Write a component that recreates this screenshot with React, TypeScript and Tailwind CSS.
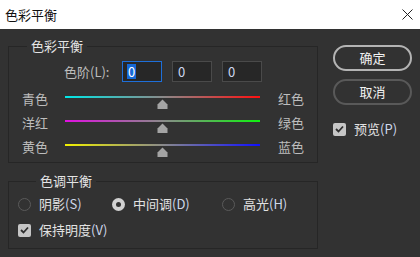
import type { ReactNode } from "react";

const font = { fontFamily: '"Noto Sans CJK SC", "Noto Sans", sans-serif' };

function Thumb() {
	return (
		<svg width="11" height="10" viewBox="0 0 11 10" className="absolute top-[3px] left-[92px]">
			<path d="M5.5 0.5 L10.5 5.5 V10 H0.5 V5.5 Z" fill="#a4a4a4" />
		</svg>
	);
}

function SliderRow({ left, right, from, to }: { left: string; right: string; from: string; to: string }) {
	return (
		<div className="flex h-[24px] items-start">
			<span className="w-[43px] text-[13px] leading-[24px] text-[#bdbdbd]">{left}</span>
			<div className="relative mt-[9px] h-[14px] w-[195px]">
				<div
					className="h-[2px] w-full"
					style={{ background: `linear-gradient(to right, ${from}, #8a8a8a 50%, ${to})` }}
				/>
				<Thumb />
			</div>
			<span className="ml-[18px] text-[13px] leading-[24px] text-[#bdbdbd]">{right}</span>
		</div>
	);
}

function NumberBox({ focused }: { focused?: boolean }) {
	return (
		<div
			className={`flex h-[21px] w-[40px] items-center border bg-[#272727] pl-[4px] ${
				focused ? "border-[#1e6fd9]" : "border-[#4a4a4a]"
			}`}
		>
			{focused ? (
				<span className="bg-[#1668d6] px-[1px] text-[13px] leading-[15px] text-white">0</span>
			) : (
				<span className="px-[1px] text-[13px] leading-[15px] text-[#cdd8f0]">0</span>
			)}
		</div>
	);
}

function Check({ label, hot }: { label: string; hot: string }) {
	return (
		<div className="flex h-[16px] items-center">
			<span className="flex h-[13px] w-[13px] items-center justify-center rounded-[2px] bg-[#c6c6c6]">
				<svg width="9" height="8" viewBox="0 0 9 8">
					<path d="M1 4 L3.5 6.5 L8 1.5" stroke="#2e2e2e" strokeWidth="1.8" fill="none" />
				</svg>
			</span>
			<span className="ml-[8px] text-[13px] text-[#e2e2e2]">
				{label}
				<span className="text-[#cfd8ea]">{hot}</span>
			</span>
		</div>
	);
}

function Radio({ label, hot, checked, width }: { label: string; hot: string; checked?: boolean; width: string }) {
	return (
		<div className={`flex h-[16px] items-center ${width}`}>
			{checked ? (
				<span className="flex h-[13px] w-[13px] items-center justify-center rounded-full bg-[#d2d2d2]">
					<span className="h-[5px] w-[5px] rounded-full bg-[#333333]" />
				</span>
			) : (
				<span className="h-[13px] w-[13px] rounded-full border-[1.5px] border-[#5a5a5a]" />
			)}
			<span className="ml-[8px] text-[13px] text-[#e2e2e2]">
				{label}
				<span className="text-[#cfd8ea]">{hot}</span>
			</span>
		</div>
	);
}

function Group({ title, children, className }: { title: string; children: ReactNode; className: string }) {
	return (
		<fieldset className={`w-[310px] border border-[#262626] ${className}`}>
			<legend className="ml-[18px] px-[4px] text-[13px] leading-[16px] text-[#e4e4e4]">{title}</legend>
			{children}
		</fieldset>
	);
}

export default function App() {
	return (
		<div className="h-[257px] w-[420px] overflow-hidden bg-[#323232]" style={font}>
			<header className="flex h-[29px] items-center justify-between bg-white pl-[5px] pr-[7px]">
				<span className="text-[13px] text-[#111111]">色彩平衡</span>
				<svg width="11" height="11" viewBox="0 0 11 11">
					<path d="M0.5 0.5 L10.5 10.5 M10.5 0.5 L0.5 10.5" stroke="#222222" strokeWidth="1" />
				</svg>
			</header>

			<div className="flex">
				<div className="ml-[8px]">
					<Group title="色彩平衡" className="mt-[9px] px-0 pt-[7px] pb-[3px]">
						<div className="flex h-[21px] items-center pl-[55px]">
							<span className="w-[58px] text-[13px] text-[#bdbdbd]">色阶(L):</span>
							<div className="flex gap-[10px]">
								<NumberBox focused />
								<NumberBox />
								<NumberBox />
							</div>
						</div>
						<div className="mt-[5px] pl-[13px]">
							<SliderRow left="青色" right="红色" from="#00e8e8" to="#ff1010" />
							<SliderRow left="洋红" right="绿色" from="#e010e0" to="#10f010" />
							<SliderRow left="黄色" right="蓝色" from="#f0f000" to="#1010ff" />
						</div>
					</Group>

					<Group title="色调平衡" className="mt-[10px] pt-[7px] pb-[10px] pl-[9px]">
						<div className="flex">
							<Radio label="阴影" hot="(S)" width="w-[94px]" />
							<Radio label="中间调" hot="(D)" checked width="w-[110px]" />
							<Radio label="高光" hot="(H)" width="w-[80px]" />
						</div>
						<div className="mt-[10px]">
							<Check label="保持明度" hot="(V)" />
						</div>
					</Group>
				</div>

				<div className="ml-[15px] mt-[16px] flex w-[79px] flex-col">
					<button className="h-[26px] rounded-full border-2 border-[#b4b4b4] text-[13px] text-[#f2f2f2]">
						确定
					</button>
					<button className="mt-[8px] h-[26px] rounded-full border-2 border-[#595959] text-[13px] text-[#f2f2f2]">
						取消
					</button>
					<div className="mt-[16px]">
						<Check label="预览" hot="(P)" />
					</div>
				</div>
			</div>
		</div>
	);
}
